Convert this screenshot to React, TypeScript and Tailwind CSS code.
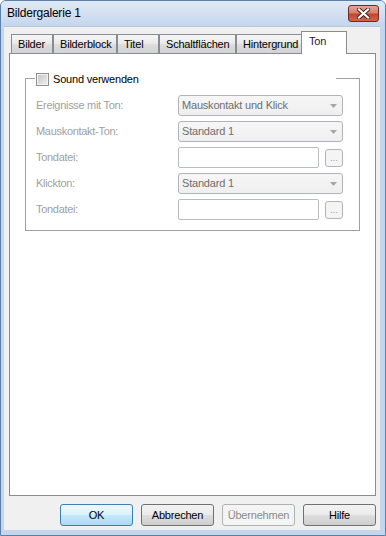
import React from "react";

const font = { fontFamily: '"Liberation Sans", Arial, sans-serif' };

function Tab({ label, w, selected }: { label: string; w: string; selected?: boolean }) {
  if (selected) {
    return (
      <div
        className={`${w} h-[23px] -ml-[2px] -mb-px relative z-10 bg-white border border-b-0 border-[#898c95] flex items-center pl-[7px] pb-[3px] text-[11px] leading-none text-[#1a1a40] tracking-[-0.2px]`}
      >
        {label}
      </div>
    );
  }
  return (
    <div
      className={`${w} h-[19px] border border-b-0 border-[#898c95] bg-[linear-gradient(to_bottom,#f6f6f6_0%,#ebebeb_45%,#dcdcdc_55%,#d3d3d3_100%)] flex items-center pl-[6px] pt-px text-[11px] leading-none text-black tracking-[-0.2px]`}
    >
      {label}
    </div>
  );
}

function Arrow() {
  return (
    <svg width="7" height="4" viewBox="0 0 7 4" className="mr-[5px]">
      <path d="M0 0 H7 L3.5 4 Z" fill="#a6a6a6" />
    </svg>
  );
}

function Combo({ value }: { value: string }) {
  return (
    <div className="flex-1 h-[21px] rounded-[3px] border border-[#b0b4b8] bg-[linear-gradient(to_bottom,#f6f6f6,#efefef)] flex items-center justify-between pl-[3px] text-[11px] leading-none text-[#6f6f6f] tracking-[-0.2px]">
      <span>{value}</span>
      <Arrow />
    </div>
  );
}

function FileField() {
  return (
    <div className="flex-1 flex items-center">
      <div className="flex-1 h-[21px] rounded-[2px] border border-[#b9bcbf] bg-white" />
      <div className="ml-[6px] w-[18px] h-[18px] rounded-[3px] border border-[#b0b4b8] bg-[#f4f4f4] flex items-end justify-center pb-[3px] text-[9px] leading-none text-[#9a9a9a]">
        ...
      </div>
    </div>
  );
}

function Row({ label, children }: { label: string; children: React.ReactNode }) {
  return (
    <div className="flex items-center h-[21px]">
      <div className="w-[142px] text-[11px] leading-none text-[#a0a0a0] tracking-[-0.3px]">{label}</div>
      {children}
    </div>
  );
}

function Btn({ label, kind }: { label: string; kind?: "default" | "disabled" }) {
  let cls =
    "border-[#707070] bg-[linear-gradient(to_bottom,#f2f2f2_0%,#ebebeb_48%,#dddddd_52%,#cfcfcf_100%)] text-black";
  if (kind === "default")
    cls =
      "border-[#3c7fb1] bg-[linear-gradient(to_bottom,#eef8fe_0%,#dcf1fc_48%,#c4e8fc_52%,#add9f3_100%)] text-black";
  if (kind === "disabled") cls = "border-[#adb2b5] bg-[#f4f4f4] text-[#8a8a8a]";
  return (
    <div
      className={`w-[73px] h-[22px] rounded-[3px] border ${cls} flex items-center justify-center text-[11px] leading-none tracking-[-0.2px]`}
    >
      {label}
    </div>
  );
}

export default function App() {
  return (
    <div style={font} className="w-[386px] h-[536px] flex flex-col bg-[#c4d6ed] border border-[#5a7fa8] rounded-t-[6px] overflow-hidden">
      {/* Title bar */}
      <div className="h-[25px] flex items-start justify-between bg-[linear-gradient(to_bottom,#e0eaf6,#d0def0_60%,#c4d6ed)]">
        <div className="pl-[6px] pt-[6px] text-[12px] leading-none text-black tracking-[-0.2px]">Bildergalerie 1</div>
        <div className="mt-[4px] mr-[6px] w-[31px] h-[17px] rounded-[3px] border border-[#6d2a25] bg-[linear-gradient(to_bottom,#e3a597_0%,#d5806f_45%,#c5452f_55%,#d0654c_100%)] flex items-center justify-center">
          <svg width="13" height="11" viewBox="0 0 13 11">
            <path d="M2 1.5 L11 9.5 M11 1.5 L2 9.5" stroke="#4a1f1b" strokeWidth="4" strokeLinecap="square" />
            <path d="M2 1.5 L11 9.5 M11 1.5 L2 9.5" stroke="#ffffff" strokeWidth="2.2" strokeLinecap="square" />
          </svg>
        </div>
      </div>

      {/* Client area */}
      <div className="flex-1 ml-[3px] mr-[5px] mb-[5px] bg-[#f0f0f0] flex flex-col border-t border-[#b7c8dc]">
        {/* Tabs */}
        <div className="pt-[4px] ml-[7px] flex items-end h-[26px]">
          <Tab label="Bilder" w="w-[42px]" />
          <Tab label="Bilderblock" w="w-[64px]" />
          <Tab label="Titel" w="w-[42px]" />
          <Tab label="Schaltflächen" w="w-[77px]" />
          <Tab label="Hintergrund" w="w-[67px]" />
          <Tab label="Ton" w="w-[46px]" selected />
        </div>

        {/* Panel */}
        <div className="flex-1 ml-[5px] mr-[4px] bg-white border border-[#898c95] pt-[19px] px-[15px]">
          <div className="flex flex-col">
            {/* Group header */}
            <div className="flex items-center h-[13px]">
              <div className="w-[10px] h-[8px] self-end border-l border-t border-[#a0a0a0]" />
              <div className="ml-[1px] w-[13px] h-[13px] border border-[#8e8f8f] bg-[#f4f4f4] p-[1px] flex">
                <div className="flex-1 bg-[linear-gradient(135deg,#c8c8c8,#ececec)]" />
              </div>
              <div className="ml-[4px] text-[11px] leading-none text-black tracking-[-0.2px]">Sound verwenden</div>
              <div className="flex-1" />
              <div className="w-[24px] h-[8px] self-end border-r border-t border-[#a0a0a0]" />
            </div>
            {/* Group body */}
            <div className="border-l border-r border-b border-[#a0a0a0] pl-[10px] pr-[16px] pt-[9px] pb-[10px] flex flex-col gap-[5px]">
              <Row label="Ereignisse mit Ton:">
                <Combo value="Mauskontakt und Klick" />
              </Row>
              <Row label="Mauskontakt-Ton:">
                <Combo value="Standard 1" />
              </Row>
              <Row label="Tondatei:">
                <FileField />
              </Row>
              <Row label="Klickton:">
                <Combo value="Standard 1" />
              </Row>
              <Row label="Tondatei:">
                <FileField />
              </Row>
            </div>
          </div>
        </div>

        {/* Buttons */}
        <div className="flex justify-end gap-[8px] pt-[8px] pb-[4px] pr-[4px]">
          <Btn label="OK" kind="default" />
          <Btn label="Abbrechen" />
          <Btn label="Übernehmen" kind="disabled" />
          <Btn label="Hilfe" />
        </div>
      </div>
    </div>
  );
}
